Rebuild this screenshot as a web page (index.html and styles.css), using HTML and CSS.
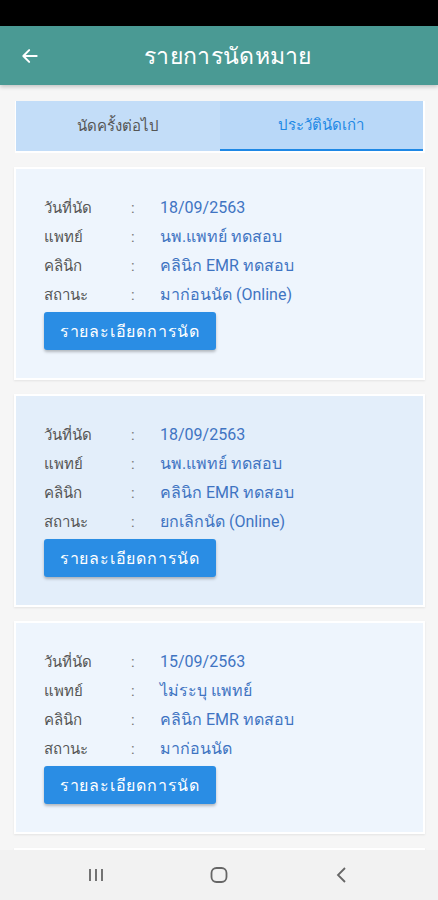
FILE: index.html
```html
<!DOCTYPE html>
<html lang="th">
<head>
    <meta charset="UTF-8">
    <meta name="viewport" content="width=device-width, initial-scale=1.0">
    <title>รายการนัดหมาย</title>
    <link rel="stylesheet" href="styles.css">
</head>
<body>
    <div class="status-bar"></div>

    <header class="app-bar">
        <svg class="back" width="20" height="20" viewBox="0 0 24 24">
            <path d="M20 12H5M11 5l-7 7 7 7" fill="none" stroke="#fff" stroke-width="2.4" stroke-linecap="round" stroke-linejoin="round"/>
        </svg>
        <h1>รายการนัดหมาย</h1>
    </header>

    <main class="content">
        <div class="tabs">
            <div class="tab">นัดครั้งต่อไป</div>
            <div class="tab active">ประวัตินัดเก่า</div>
        </div>

        <div class="card">
            <div class="row"><span class="label">วันที่นัด</span><span class="colon">:</span><span class="value">18/09/2563</span></div>
            <div class="row"><span class="label">แพทย์</span><span class="colon">:</span><span class="value">นพ.แพทย์ ทดสอบ</span></div>
            <div class="row"><span class="label">คลินิก</span><span class="colon">:</span><span class="value">คลินิก EMR ทดสอบ</span></div>
            <div class="row"><span class="label">สถานะ</span><span class="colon">:</span><span class="value">มาก่อนนัด (Online)</span></div>
            <button class="detail">รายละเอียดการนัด</button>
        </div>

        <div class="card cancelled">
            <div class="row"><span class="label">วันที่นัด</span><span class="colon">:</span><span class="value">18/09/2563</span></div>
            <div class="row"><span class="label">แพทย์</span><span class="colon">:</span><span class="value">นพ.แพทย์ ทดสอบ</span></div>
            <div class="row"><span class="label">คลินิก</span><span class="colon">:</span><span class="value">คลินิก EMR ทดสอบ</span></div>
            <div class="row"><span class="label">สถานะ</span><span class="colon">:</span><span class="value">ยกเลิกนัด (Online)</span></div>
            <button class="detail">รายละเอียดการนัด</button>
        </div>

        <div class="card">
            <div class="row"><span class="label">วันที่นัด</span><span class="colon">:</span><span class="value">15/09/2563</span></div>
            <div class="row"><span class="label">แพทย์</span><span class="colon">:</span><span class="value">ไม่ระบุ แพทย์</span></div>
            <div class="row"><span class="label">คลินิก</span><span class="colon">:</span><span class="value">คลินิก EMR ทดสอบ</span></div>
            <div class="row"><span class="label">สถานะ</span><span class="colon">:</span><span class="value">มาก่อนนัด</span></div>
            <button class="detail">รายละเอียดการนัด</button>
        </div>

        <div class="card"></div>
    </main>

    <nav class="nav-bar">
        <svg width="20" height="20" viewBox="0 0 20 20">
            <path d="M4 4v12M10 4v12M16 4v12" stroke="#666" stroke-width="1.8"/>
        </svg>
        <svg width="20" height="20" viewBox="0 0 20 20">
            <rect x="2.5" y="3" width="15" height="14" rx="5" fill="none" stroke="#666" stroke-width="1.8"/>
        </svg>
        <svg width="20" height="20" viewBox="0 0 20 20">
            <path d="M13 3l-7 7 7 7" fill="none" stroke="#666" stroke-width="1.8"/>
        </svg>
    </nav>
</body>
</html>
```

FILE: styles.css
```css
body {
    margin: 0;
    height: 900px;
    overflow: hidden;
    position: relative;
    background: #f6f6f6;
    font-family: Roboto, "Noto Sans", sans-serif;
}
.status-bar {
    height: 26px;
    background: #000;
}
.app-bar {
    height: 59px;
    background: #4a9a94;
    display: flex;
    align-items: center;
    justify-content: center;
    padding-left: 18px;
    position: relative;
    box-shadow: 0 2px 4px rgba(0, 0, 0, 0.2);
}
.app-bar .back {
    position: absolute;
    left: 20px;
    top: 20px;
}
.app-bar h1 {
    margin: 0;
    color: #fff;
    font-size: 23px;
    font-weight: normal;
    letter-spacing: 0.3px;
}
.content {
    padding: 16px 13px 0 14px;
}
.tabs {
    display: flex;
    background: #fff;
    padding: 0 2px 2px 1px;
    margin: 0 0 14px 1px;
}
.tab {
    flex: 1;
    height: 50px;
    display: flex;
    align-items: center;
    justify-content: center;
    background: #c3ddf8;
    color: #555;
    font-size: 15px;
}
.tab.active {
    background: #b9d8f8;
    color: #1e88e5;
    border-bottom: 2px solid #1e88e5;
    height: 48px;
}
.card {
    background: #eef5fd;
    border: 2px solid #fff;
    box-shadow: 0 1px 2px rgba(0, 0, 0, 0.08);
    padding: 24px 28px 27px;
    margin-bottom: 14px;
    height: 158px;
}
.card.cancelled {
    background: #e3eefa;
}
.row {
    display: flex;
    height: 29px;
    align-items: center;
    font-size: 15px;
}
.label {
    width: 87px;
    color: #555;
}
.colon {
    width: 29px;
    color: #777;
}
.value {
    color: #3f74c2;
    font-size: 16px;
}
.detail {
    margin-top: 3px;
    width: 172px;
    height: 38px;
    background: #2a8de4;
    color: #fff;
    border: none;
    border-radius: 3px;
    font-family: inherit;
    font-size: 16px;
    letter-spacing: 0.8px;
    box-shadow: 0 2px 3px rgba(0, 0, 0, 0.25);
}
.nav-bar {
    position: absolute;
    left: 0;
    right: 0;
    bottom: 0;
    height: 50px;
    background: #f2f2f2;
    display: flex;
    justify-content: space-around;
    align-items: center;
    padding: 0 34px;
}
```
